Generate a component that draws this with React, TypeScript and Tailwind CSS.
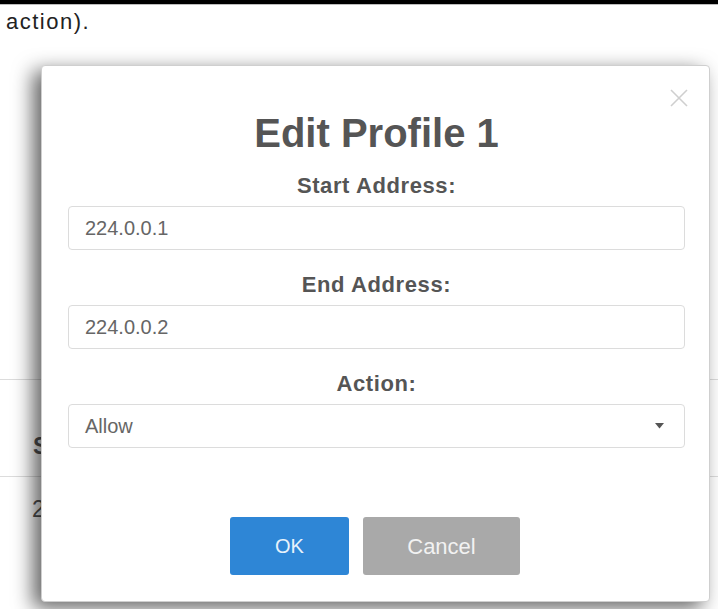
import { useState } from 'react';

type Field = {
  label: string;
  value: string;
  select?: boolean;
};

const fields: Field[] = [
  { label: 'Start Address:', value: '224.0.0.1' },
  { label: 'End Address:', value: '224.0.0.2' },
  { label: 'Action:', value: 'Allow', select: true },
];

function CloseIcon() {
  return (
    <svg width="20" height="20" viewBox="0 0 20 20" fill="none">
      <path d="M2 2 L18 18 M18 2 L2 18" stroke="#cfcfcf" strokeWidth="1.6" />
    </svg>
  );
}

function Caret() {
  return (
    <svg width="9" height="6" viewBox="0 0 9 6">
      <path d="M0 0 H9 L4.5 5.5 Z" fill="#555" />
    </svg>
  );
}

export default function App() {
  const [open] = useState(true);

  return (
    <div className="relative w-[718px] h-[609px] overflow-hidden bg-white font-['Liberation_Sans',Arial,sans-serif]">
      {/* page behind the dialog */}
      <div className="h-[4px] bg-black" />
      <div className="h-px bg-[#bdbdbd]" />
      <p className="pl-[6px] pt-[4px] text-[22px] leading-[26px] tracking-[1.5px] text-[#222]">
        action).
      </p>

      <div className="mt-[344px]">
        <div className="h-px bg-[#dcdcdc]" />
        <div className="h-[96px] flex items-center pl-[33px] pt-[36px] text-[23px] font-bold text-[#555]">
          S
        </div>
        <div className="h-px bg-[#dcdcdc]" />
        <div className="h-[56px] flex items-center pl-[32px] pt-[8px] text-[23px] text-[#555]">
          2
        </div>
      </div>

      {/* dialog */}
      {open && (
        <div className="absolute left-[41px] top-[65px] w-[669px] h-[537px] bg-white rounded-[4px] border border-[#cfcfcf] shadow-[-8px_6px_20px_rgba(0,0,0,0.62)] flex flex-col pl-[26px] pr-[24px]">
          <button className="absolute right-[20px] top-[22px]">
            <CloseIcon />
          </button>

          <h1 className="mt-[43px] text-center text-[40px] leading-[48px] font-bold text-[#555]">
            Edit Profile 1
          </h1>

          {fields.map((f, i) => (
            <div key={f.label} className={i === 0 ? 'mt-[16px]' : 'mt-[22px]'}>
              <div className="text-center text-[22px] leading-[26px] font-bold tracking-[0.6px] text-[#555]">
                {f.label}
              </div>
              <div className="mt-[7px] h-[44px] flex items-center justify-between rounded-[4px] border border-[#dcdcdc] bg-white pl-[16px] pr-[20px] text-[20px] text-[#666]">
                <span>{f.value}</span>
                {f.select && <Caret />}
              </div>
            </div>
          ))}

          <div className="mt-auto mb-[26px] pr-[3px] flex justify-center gap-[14px]">
            <button className="w-[119px] h-[58px] rounded-[3px] bg-[#2e86d6] text-[20px] text-[#e8f2fb]">
              OK
            </button>
            <button className="w-[157px] h-[58px] rounded-[3px] bg-[#a9a9a9] text-[22px] text-[#f2f2f2]">
              Cancel
            </button>
          </div>
        </div>
      )}
    </div>
  );
}
